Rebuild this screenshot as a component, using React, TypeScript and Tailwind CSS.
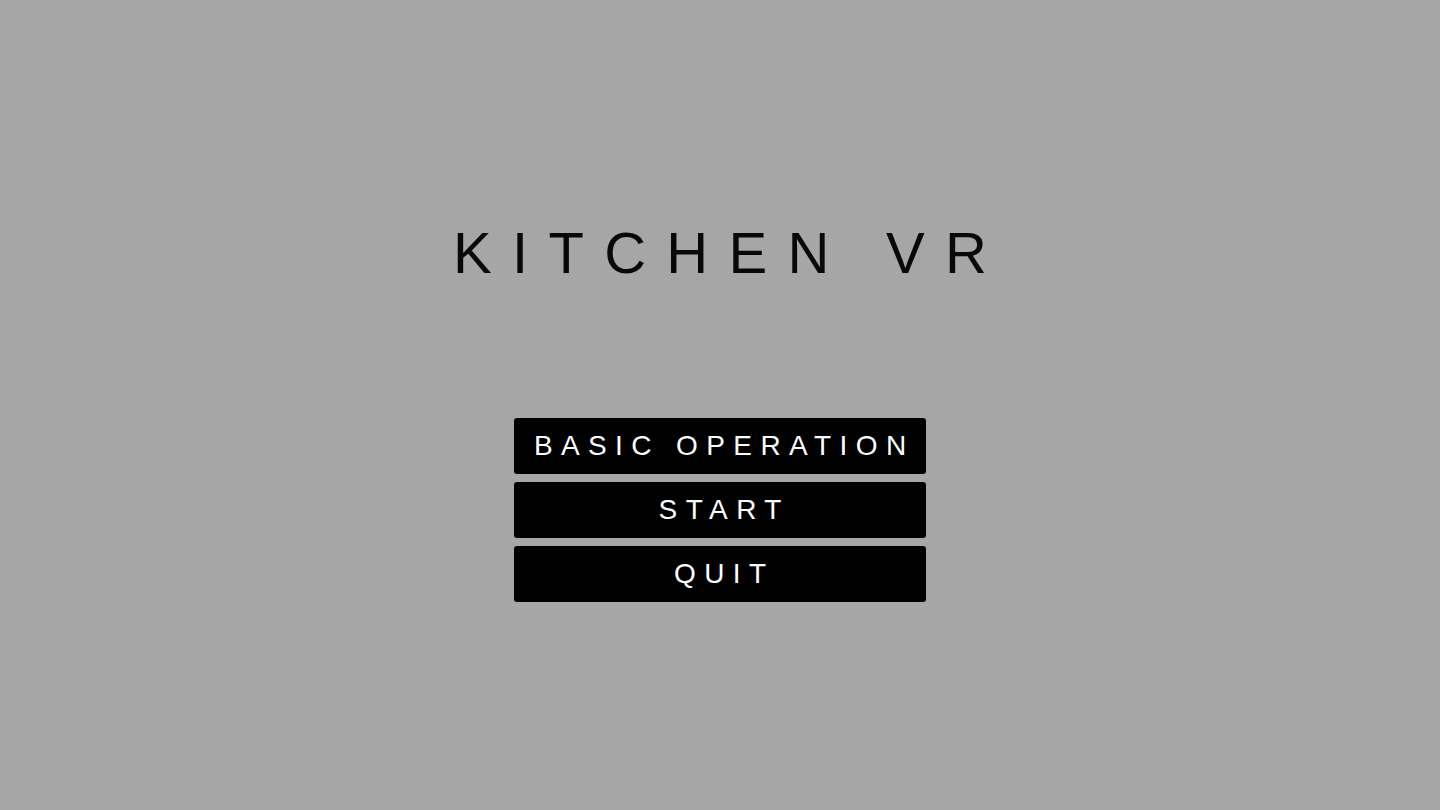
const items = ["BASIC OPERATION", "START", "QUIT"];

const App = () => {
  return (
    <main
      className="h-screen w-full bg-[#a6a6a6] flex flex-col items-center pt-[224px]"
      style={{ fontFamily: '"Liberation Sans", Arial, sans-serif' }}
    >
      <h1 className="text-[58px] leading-none tracking-[0.35em] pl-[0.35em] text-[#080808] font-normal">
        KITCHEN VR
      </h1>
      <nav className="mt-[136px] flex flex-col gap-2">
        {items.map((label) => (
          <button
            key={label}
            className="w-[412px] h-14 bg-black rounded-[3px] flex items-center justify-center text-white text-[28px] leading-none tracking-[0.3em] pl-[0.3em]"
          >
            {label}
          </button>
        ))}
      </nav>
    </main>
  );
};

export default App;
